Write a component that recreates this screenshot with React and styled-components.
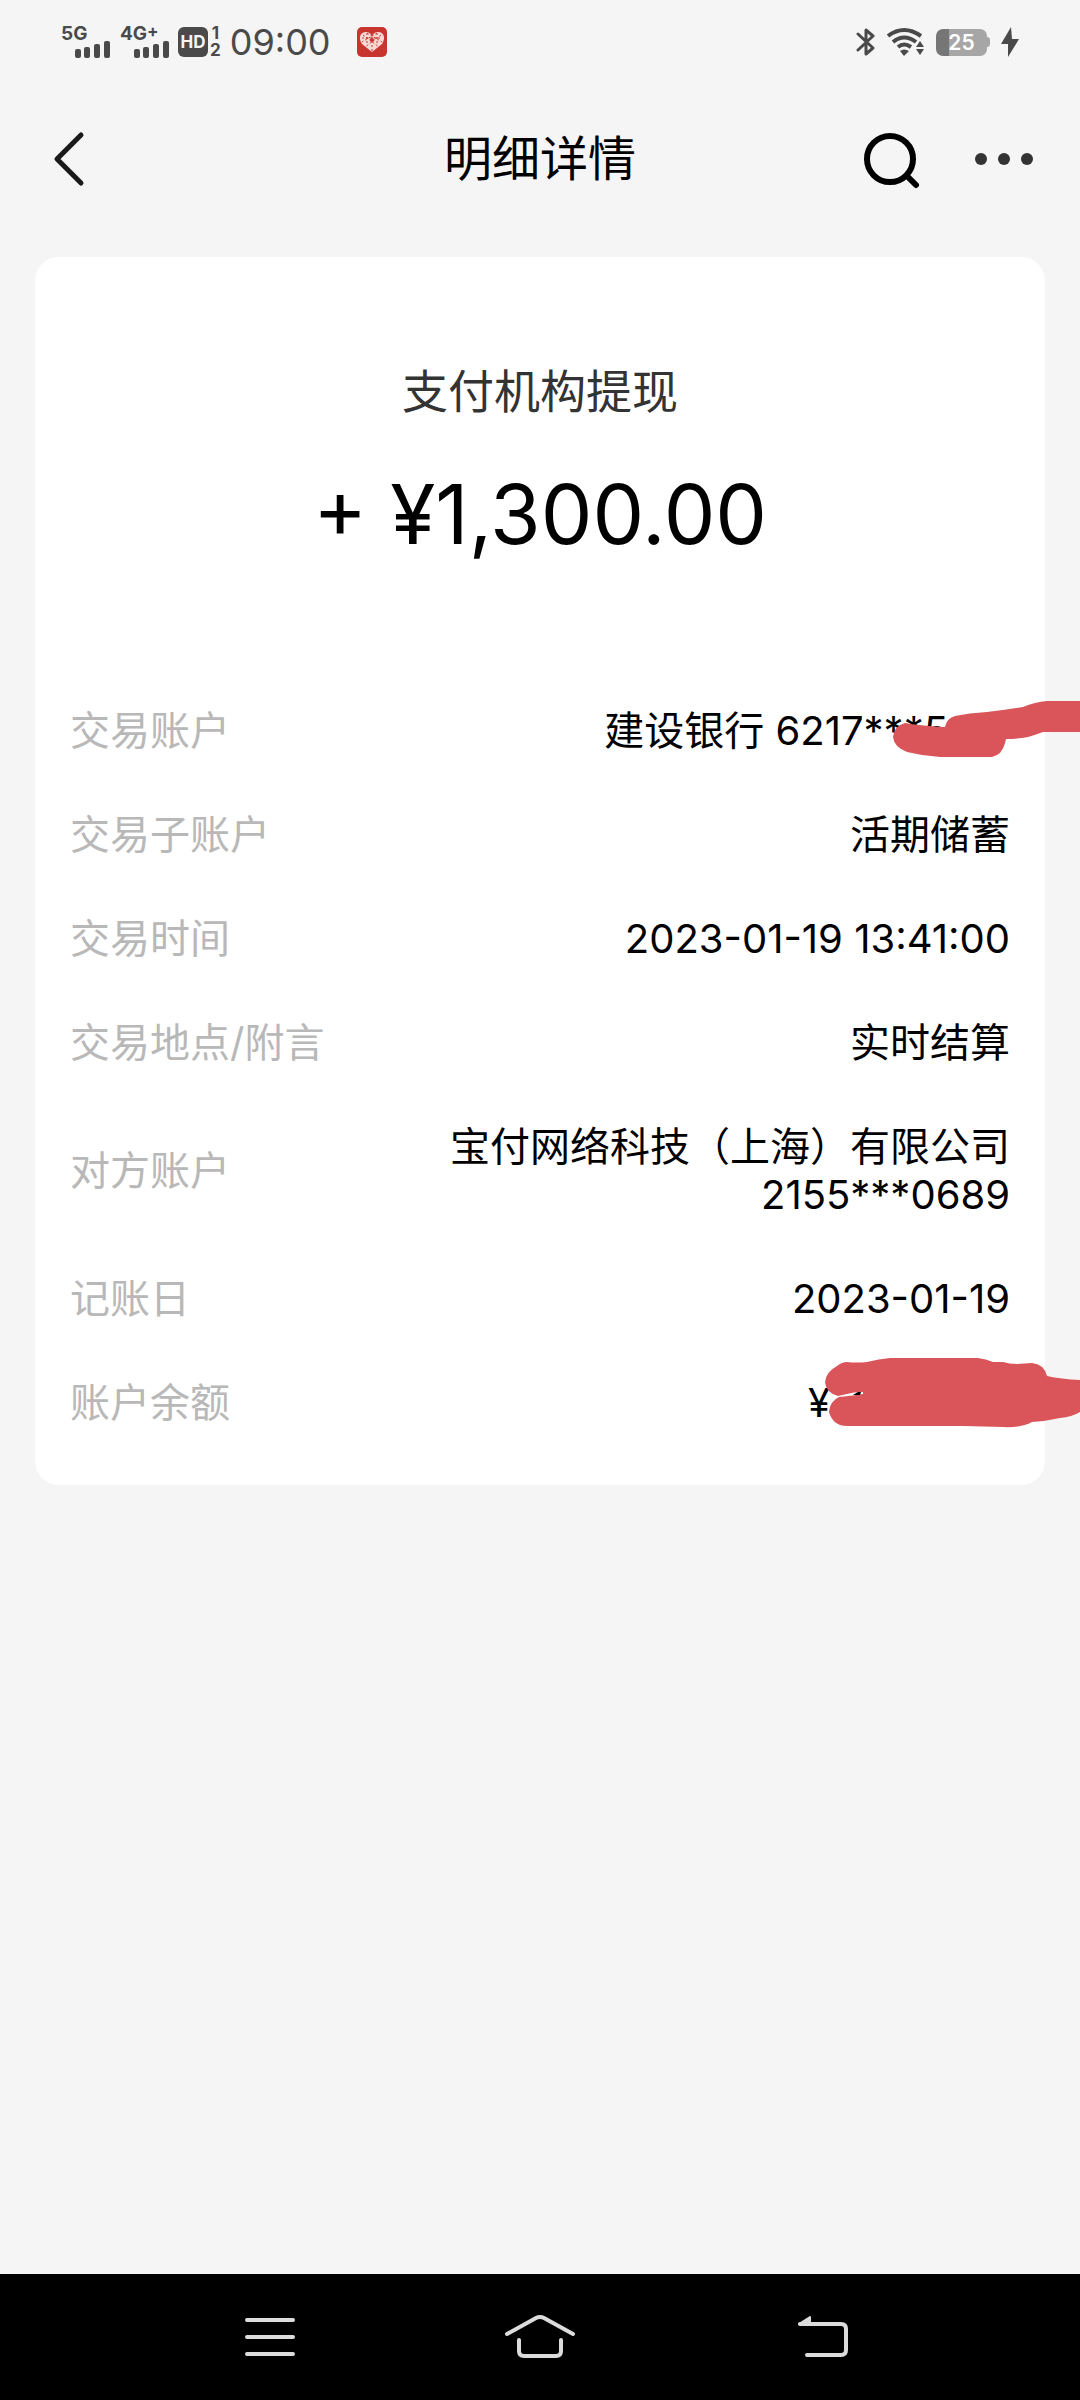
import React from 'react';
import styled, { createGlobalStyle } from 'styled-components';

const GlobalStyle = createGlobalStyle`
    * {
        box-sizing: border-box;
    }
    body {
        margin: 0;
        background-color: #f5f5f5;
        font-family: Inter, 'Noto Sans CJK SC', sans-serif;
        color: #000;
    }
    button {
        display: flex;
        align-items: center;
        justify-content: center;
        padding: 0;
        border: none;
        background: none;
        cursor: pointer;
    }
    svg {
        display: block;
    }
`;

const Page = styled.div`
    min-height: 100vh;
    display: flex;
    flex-direction: column;
    overflow-x: hidden;
`;

const StatusBar = styled.div`
    height: 84px;
    padding: 0 60px;
    display: flex;
    align-items: center;
    justify-content: space-between;
    color: #4a4a4a;
`;

const StatusGroup = styled.div`
    display: flex;
    align-items: center;
    gap: ${(props) => props.$gap}px;
`;

const SignalBox = styled.div`
    display: flex;
    flex-direction: column;
    width: 50px;

    .network {
        display: flex;
        align-items: flex-start;
        height: 15px;
        padding-left: 1px;
        font-size: 19px;
        line-height: 15px;
        font-weight: 700;
    }
    .plus {
        font-size: 17px;
        line-height: 10px;
    }
    svg {
        align-self: flex-end;
    }
`;

const HdBox = styled.div`
    display: flex;
    align-items: center;
    gap: 2px;

    .badge {
        width: 30px;
        height: 30px;
        border-radius: 6px;
        background-color: #4a4a4a;
        color: #f5f5f5;
        font-size: 17px;
        line-height: 30px;
        font-weight: 700;
        text-align: center;
    }
    .sims {
        display: flex;
        flex-direction: column;
        align-items: center;
        font-size: 17px;
        line-height: 17px;
        font-weight: 700;
    }
`;

const Clock = styled.time`
    font-size: 36px;
    line-height: 40px;
    margin-right: 17px;
`;

const Battery = styled.div`
    display: flex;
    align-items: center;

    .body {
        width: 51px;
        height: 27px;
        border-radius: 7px;
        background: linear-gradient(to right, #767676 25%, #a6a6a6 25%);
        color: #fff;
        font-size: 21px;
        line-height: 27px;
        font-weight: 600;
        text-align: center;
    }
    .tip {
        width: 3px;
        height: 10px;
        border-radius: 0 3px 3px 0;
        background-color: #a6a6a6;
    }
`;

const Header = styled.header`
    height: 150px;
    padding: 0 36px;
    display: grid;
    grid-template-columns: 1fr auto 1fr;
    align-items: center;

    h1 {
        margin: 0;
        font-size: 48px;
        line-height: 64px;
        font-weight: 400;
    }
`;

const HeaderActions = styled.div`
    display: flex;
    justify-content: flex-end;
    gap: 48px;
    padding-right: 8px;
`;

const IconButton = styled.button`
    width: ${(props) => props.$width || 64}px;
    height: 64px;
`;

const Card = styled.main`
    margin: 23px 35px 0;
    padding: 102px 35px 30px;
    border-radius: 24px;
    background-color: #fff;
`;

const Summary = styled.section`
    text-align: center;
    margin-bottom: 104px;

    h2 {
        margin: 0;
        font-size: 46px;
        line-height: 64px;
        font-weight: 400;
        color: #333;
    }
    p {
        margin: 32px 0 0;
        font-size: 82px;
        line-height: 120px;
    }
`;

const Details = styled.dl`
    margin: 0;
`;

const Row = styled.div`
    display: flex;
    align-items: center;
    justify-content: space-between;
    padding: 28px 0;
    font-size: 40px;
    line-height: 48px;

    dt {
        color: #b8b8b8;
    }
    dd {
        margin: 0;
        position: relative;
        text-align: right;
        white-space: pre-line;
    }
`;

const Hidden = styled.span`
    display: inline-block;
    width: ${(props) => props.$width}px;
`;

/* lies over the value and runs on to the edge of the screen */
const Scribble = styled.svg`
    position: absolute;
    top: ${(props) => props.$top}px;
    right: -70px;
    fill: #da555a;
`;

const NavBar = styled.nav`
    height: 126px;
    margin-top: auto;
    padding: 0 135px;
    display: grid;
    grid-template-columns: repeat(3, 1fr);
    justify-items: center;
    align-items: center;
    background-color: #000;

    svg {
        fill: none;
        stroke: #dcdcdc;
        stroke-width: 4;
        stroke-linecap: round;
        stroke-linejoin: round;
    }
`;

const Signal = ({ label, plus }) => (
    <SignalBox>
        <span className="network">
            {label}
            {plus && <span className="plus">+</span>}
        </span>
        <svg width="36" height="17" viewBox="0 0 36 17" fill="currentColor">
            <rect x="1" y="8" width="6" height="9" rx="2" />
            <rect x="10" y="6" width="6" height="11" rx="2" />
            <rect x="20" y="3" width="6" height="14" rx="2" />
            <rect x="30" y="0" width="6" height="17" rx="2" />
        </svg>
    </SignalBox>
);

const HeartApp = () => (
    <svg width="30" height="30" viewBox="0 0 30 30">
        <rect width="30" height="30" rx="5" fill="#c8352f" />
        <path
            d="M15 25 L5 17 C1 11 3 5 9 5 C12 5 14 7 15 9 C16 7 18 5 21 5 C27 5 29 11 25 17 Z"
            fill="#f6d9d5"
        />
        <path
            d="M6 8 L22 20 M10 6 L25 15 M24 8 L8 20 M20 6 L5 15 M10 6 V18 M20 6 V18 M15 10 V24 M5 11 H25"
            stroke="#c8352f"
            strokeWidth="1"
            strokeDasharray="2 2"
            fill="none"
        />
        <circle cx="15" cy="13" r="2" fill="#c8352f" />
    </svg>
);

const Bluetooth = () => (
    <svg width="20" height="30" viewBox="0 0 20 30" fill="none" stroke="currentColor" strokeWidth="3" strokeLinejoin="round" strokeLinecap="round">
        <path d="M2 7 L17 21 L10 27 V3 L17 9 L2 23" />
    </svg>
);

const Wifi = () => (
    <svg width="40" height="30" viewBox="0 0 40 30" fill="none" stroke="currentColor" strokeWidth="4">
        <path d="M2 9 Q18 -3 35 9" />
        <path d="M7 15 Q18 6 30 15" />
        <path d="M12 20 Q18 15 25 20" />
        <path d="M14 24 Q18 21 23 24 L18 29 Z" fill="currentColor" stroke="none" />
        <path d="M34 14 L38 20 H30 Z M34 28 L38 22 H30 Z" fill="currentColor" stroke="none" />
    </svg>
);

const rows = [
    {
        label: '交易账户',
        value: '建设银行 6217***5',
        hidden: 62,
        scribble: {
            top: -7,
            width: 187,
            height: 58,
            d: 'M0 37 Q1 26 12 23 Q30 26 52 27 Q54 18 62 16 Q76 13 94 12 Q112 10 130 7 Q142 2 154 1 H187 V32 H150 Q142 35 135 37 Q124 39 113 39 L112 43 Q109 55 99 57 H47 Q30 56 14 52 Q1 47 0 37 Z',
        },
    },
    { label: '交易子账户', value: '活期储蓄' },
    { label: '交易时间', value: '2023-01-19 13:41:00' },
    { label: '交易地点/附言', value: '实时结算' },
    { label: '对方账户', value: '宝付网络科技（上海）有限公司\n2155***0689' },
    { label: '记账日', value: '2023-01-19' },
    {
        label: '账户余额',
        value: '¥',
        hidden: 180,
        scribble: {
            top: -21,
            width: 255,
            height: 70,
            d: 'M0 24 Q1 14 12 8 Q17 4 22 4 Q32 5 42 4 Q54 1 65 0 H153 Q161 1 168 4 H178 Q184 6 192 6 L207 5 Q219 6 222 18 Q236 21 255 22 V54 Q247 59 235 60 Q222 63 207 64 Q196 70 178 69 L138 68 H22 Q8 68 4 54 Q5 43 14 39 Q24 38 38 36 V34 Q28 34 22 36 L13 38 Q1 35 0 24 Z',
            tip: 'M28 37 L33 34 L36 34 L35 37 Z',
        },
    },
];

const App = () => {
    return (
        <Page>
            <GlobalStyle />
            <StatusBar>
                <StatusGroup $gap={9}>
                    <Signal label="5G" />
                    <Signal label="4G" plus />
                    <HdBox>
                        <span className="badge">HD</span>
                        <span className="sims">
                            <span>1</span>
                            <span>2</span>
                        </span>
                    </HdBox>
                    <Clock>09:00</Clock>
                    <HeartApp />
                </StatusGroup>
                <StatusGroup $gap={10}>
                    <Bluetooth />
                    <Wifi />
                    <Battery>
                        <span className="body">25</span>
                        <span className="tip" />
                    </Battery>
                    <svg width="20" height="32" viewBox="0 0 20 32" fill="currentColor">
                        <path d="M11 1 L1 18 H8 V31 L19 13 H12 Z" />
                    </svg>
                </StatusGroup>
            </StatusBar>

            <Header>
                <IconButton aria-label="返回">
                    <svg width="36" height="60" viewBox="0 0 36 60" fill="none" stroke="#1a1a1a" strokeWidth="5" strokeLinecap="round" strokeLinejoin="round">
                        <path d="M31 6 L7 30 L31 54" />
                    </svg>
                </IconButton>
                <h1>明细详情</h1>
                <HeaderActions>
                    <IconButton aria-label="搜索">
                        <svg width="60" height="60" viewBox="0 0 60 60" fill="none" stroke="#000" strokeWidth="6" strokeLinecap="round">
                            <circle cx="28" cy="30" r="23" />
                            <path d="M46 48 L54 56" />
                        </svg>
                    </IconButton>
                    <IconButton aria-label="更多">
                        <svg width="58" height="12" viewBox="0 0 58 12" fill="#333">
                            <circle cx="6" cy="6" r="6" />
                            <circle cx="29" cy="6" r="6" />
                            <circle cx="52" cy="6" r="6" />
                        </svg>
                    </IconButton>
                </HeaderActions>
            </Header>

            <Card>
                <Summary>
                    <h2>支付机构提现</h2>
                    <p>+ ¥1,300.00</p>
                </Summary>
                <Details>
                    {rows.map((row) => (
                        <Row key={row.label}>
                            <dt>{row.label}</dt>
                            <dd>
                                {row.value}
                                {row.hidden && <Hidden $width={row.hidden} />}
                                {row.scribble && (
                                    <Scribble
                                        $top={row.scribble.top}
                                        width={row.scribble.width}
                                        height={row.scribble.height}
                                        viewBox={`0 0 ${row.scribble.width} ${row.scribble.height}`}>
                                        <path d={row.scribble.d} />
                                        {row.scribble.tip && <path d={row.scribble.tip} fill="#000" />}
                                    </Scribble>
                                )}
                            </dd>
                        </Row>
                    ))}
                </Details>
            </Card>

            <NavBar>
                <IconButton $width={80} aria-label="菜单">
                    <svg width="54" height="40" viewBox="0 0 54 40">
                        <path d="M4 3 H50 M4 20 H50 M4 37 H50" />
                    </svg>
                </IconButton>
                <IconButton $width={80} aria-label="主页">
                    <svg width="72" height="46" viewBox="0 0 72 46">
                        <path d="M3 20 L32 4 Q36 2 40 4 L69 20" />
                        <path d="M15 26 V37 Q15 42 20 42 H52 Q57 42 57 37 V26" />
                    </svg>
                </IconButton>
                <IconButton $width={80} aria-label="后退">
                    <svg width="80" height="44" viewBox="-26 0 80 44">
                        <path d="M4 9 H45 Q50 9 50 14 V35 Q50 40 45 40 H11" />
                        <path d="M3 9 L14 2 V9 Z" fill="#dcdcdc" strokeWidth="2" />
                    </svg>
                </IconButton>
            </NavBar>
        </Page>
    );
};

export default App;
